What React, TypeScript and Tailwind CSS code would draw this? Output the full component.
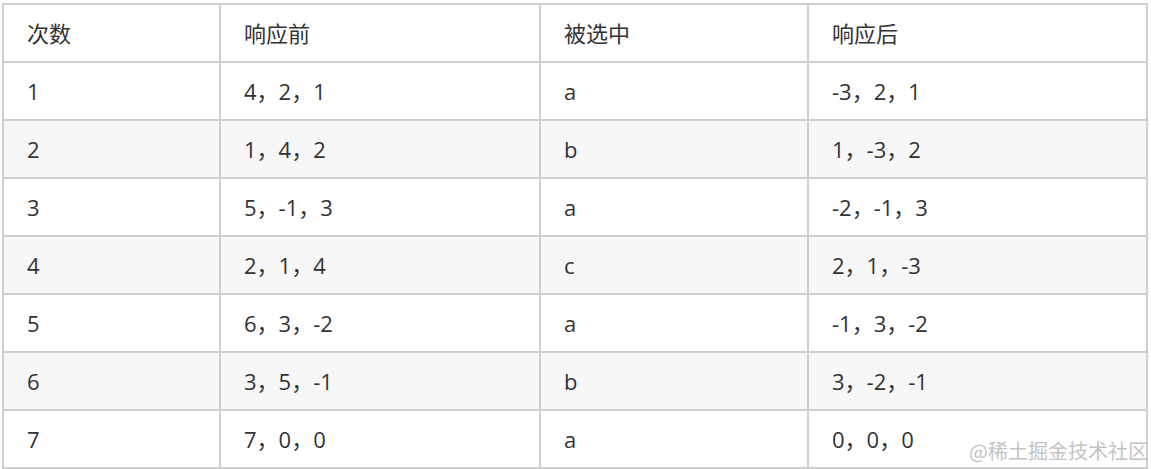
import React from 'react';

const rows = [
  ['1', '4，2，1', 'a', '-3，2，1'],
  ['2', '1，4，2', 'b', '1，-3，2'],
  ['3', '5，-1，3', 'a', '-2，-1，3'],
  ['4', '2，1，4', 'c', '2，1，-3'],
  ['5', '6，3，-2', 'a', '-1，3，-2'],
  ['6', '3，5，-1', 'b', '3，-2，-1'],
  ['7', '7，0，0', 'a', '0，0，0'],
];

function App() {
  return (
    <div
      className="relative w-[1151px] h-[469px] bg-white overflow-hidden pl-[2px] pt-[3px] text-[#333]"
      style={{ fontFamily: '"Open Sans", "Noto Sans CJK SC", sans-serif' }}
    >
      <table className="border-collapse table-fixed w-[1144px] text-[22px]">
        <colgroup>
          <col className="w-[217px]" />
          <col className="w-[320px]" />
          <col className="w-[268px]" />
          <col className="w-[339px]" />
        </colgroup>
        <thead>
          <tr className="h-[58px]">
            {['次数', '响应前', '被选中', '响应后'].map((h) => (
              <th key={h} className="border-2 border-[#cfcfcf] px-[23px] text-left font-normal">
                {h}
              </th>
            ))}
          </tr>
        </thead>
        <tbody>
          {rows.map((r, i) => (
            <tr key={r[0]} className={`h-[58px] ${i % 2 === 1 ? 'bg-[#f7f7f7]' : 'bg-white'}`}>
              {r.map((c, j) => (
                <td key={j} className="border-2 border-[#cfcfcf] px-[23px]">
                  {c}
                </td>
              ))}
            </tr>
          ))}
        </tbody>
      </table>
      <div
        className="absolute right-[3px] bottom-[3px] text-[20px] text-[#c4c4c4]"
        style={{ fontFamily: '"Noto Sans CJK SC", sans-serif' }}
      >
        @稀土掘金技术社区
      </div>
    </div>
  );
}

export default App;
